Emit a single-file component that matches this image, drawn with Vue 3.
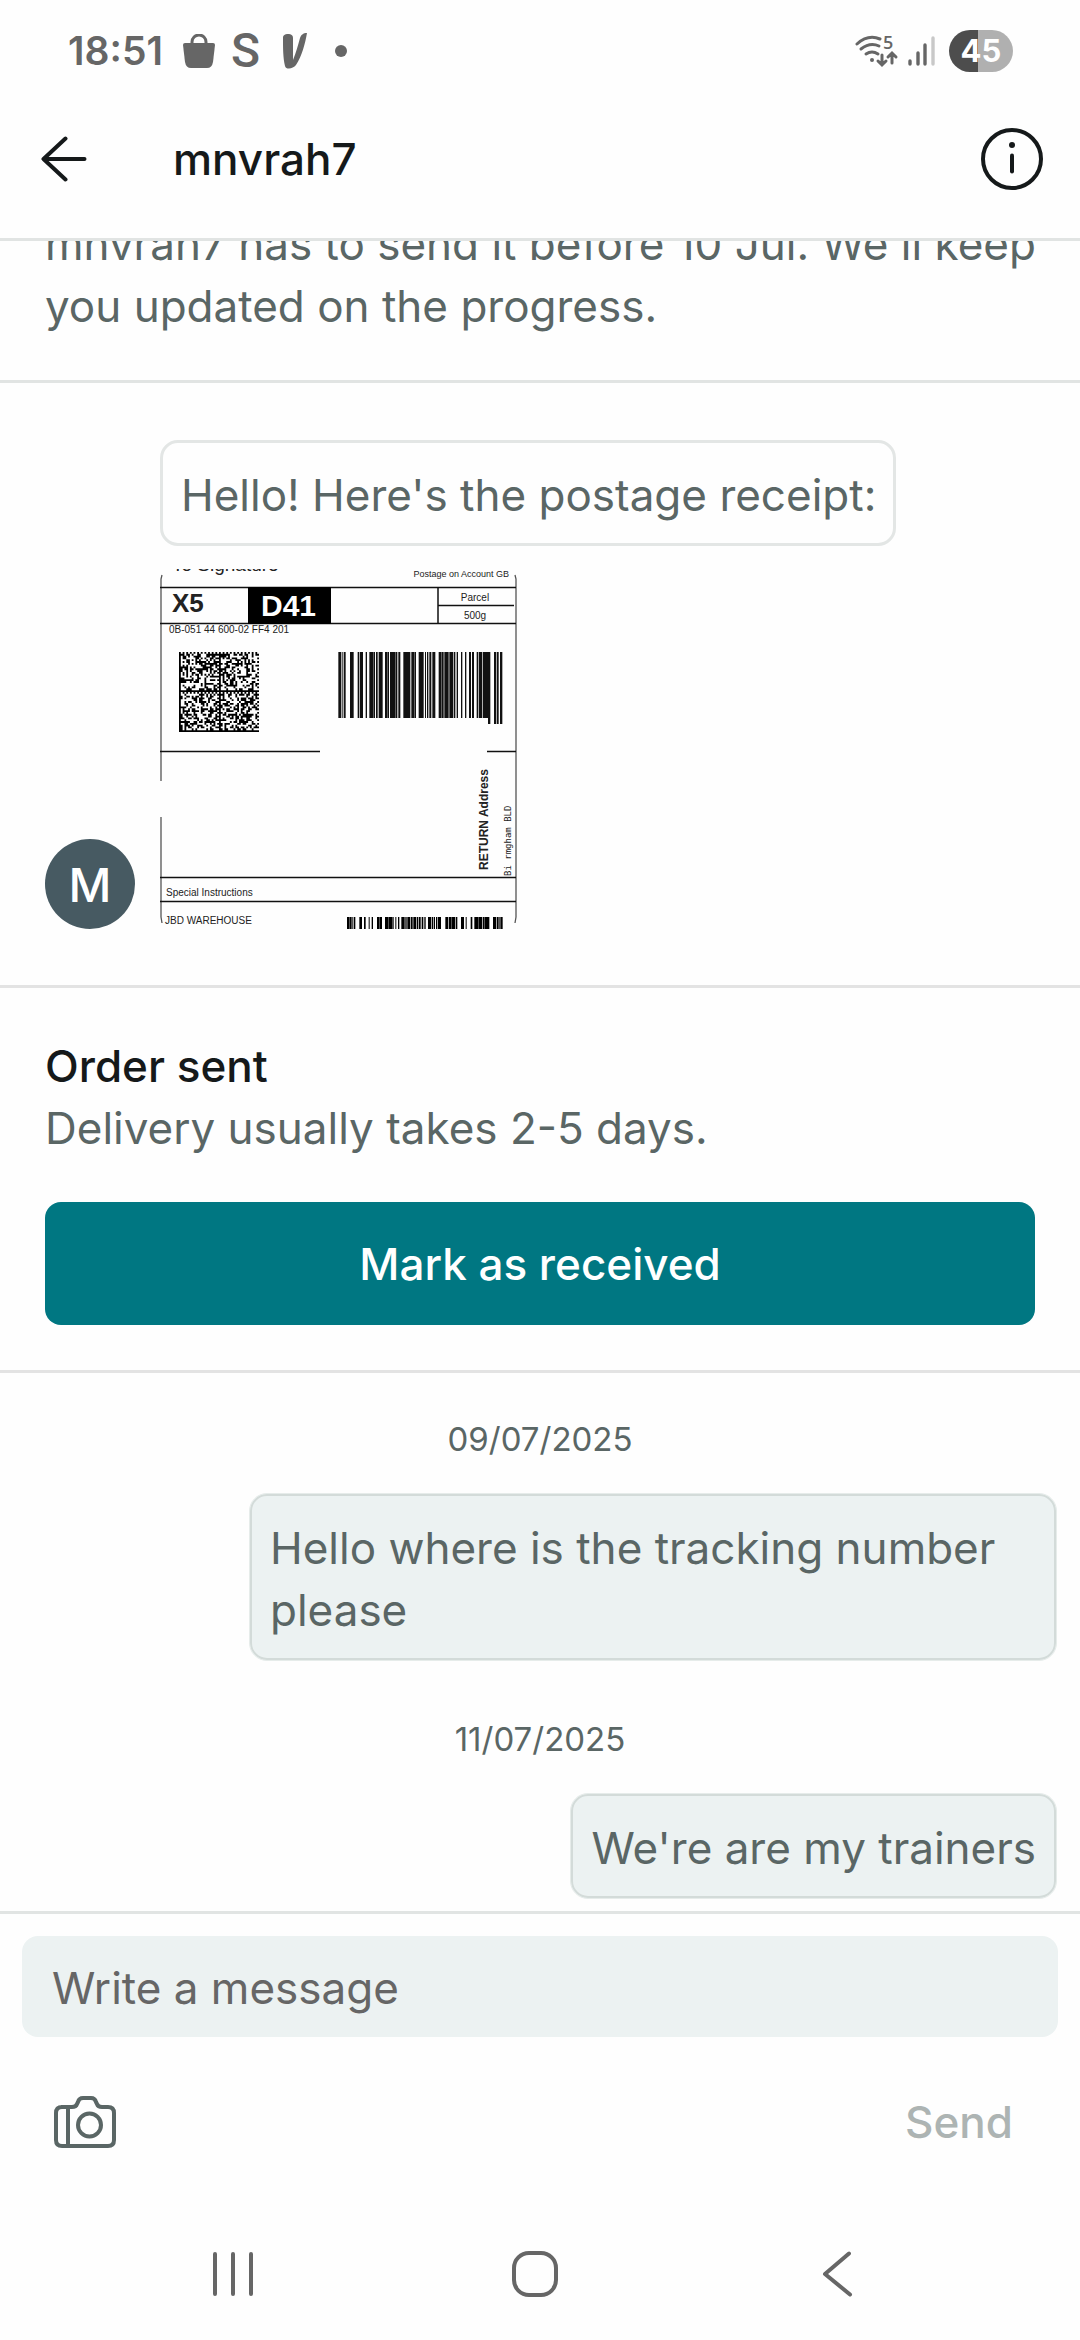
<template>
    <div class="screen">
        <div class="status">
            <span class="clock">18:51</span>
            <svg class="bag" viewBox="0 0 32 34" width="32" height="34">
                <path d="M9 10V8a7 7 0 0 1 14 0v2" fill="none" stroke="#666" stroke-width="3" />
                <path d="M2 9h28q2 0 2 2l-2 17q-1 6-6 6H8q-5 0-6-6L0 11q0-2 2-2z" fill="#666" />
            </svg>
            <span class="letter">S</span>
            <svg class="vlogo" viewBox="0 0 24 36" width="24" height="36">
                <path d="M0 5C0 2 2 1 5 1s5 1 5 4l0 22C13 20 15 12 17 5 18 2 20 0 24 0 22 11 19 23 13 32 10 36 3 37 2 33 0 25 0 14 0 5z" fill="#666" />
            </svg>
            <span class="dot"></span>
            <div class="system">
                <svg viewBox="0 -3 44 38" width="44" height="38">
                    <g fill="none" stroke="#666" stroke-width="3" stroke-linecap="round">
                        <path d="M2 9Q13-1 25 4" />
                        <path d="M6 14Q15 7 24 11" />
                        <path d="M11 19q6-4 12 0" />
                        <path d="M27 20v9M23 26l4 4 4-4M37 28v-9M33 22l4-4 4 4" />
                    </g>
                    <circle cx="17" cy="25" r="2" fill="#666" />
                    <text x="28" y="14" class="wifitext">5</text>
                </svg>
                <svg viewBox="0 0 28 30" width="28" height="30">
                    <path d="M3 25v3M11 17v11M18 9v19" stroke="#666" stroke-width="3.4" stroke-linecap="round" />
                    <path d="M26 2v26" stroke="#c8c8c8" stroke-width="3.4" stroke-linecap="round" />
                </svg>
                <span class="battery">45</span>
            </div>
        </div>

        <header class="header">
            <button class="iconbtn" aria-label="Back">
                <svg viewBox="0 0 46 46" width="46" height="46">
                    <path d="M43.500 23H3M24.500 2.500L2.500 23l22 20.500" fill="none" stroke="#15191a" stroke-width="4" stroke-linecap="round" stroke-linejoin="round" />
                </svg>
            </button>
            <h1>{{ seller }}</h1>
            <button class="iconbtn" aria-label="Details">
                <svg viewBox="0 0 62 62" width="62" height="62">
                    <circle cx="31" cy="31" r="29" fill="none" stroke="#15191a" stroke-width="4" />
                    <circle cx="31" cy="17" r="3" fill="#15191a" />
                    <path d="M31 27.500v16" stroke="#15191a" stroke-width="4" stroke-linecap="round" />
                </svg>
            </button>
        </header>

        <main class="chat">
            <section class="notice">
                <p>{{ seller }} has to send it before 10 Jul. We'll keep you updated on the progress.</p>
            </section>

            <section class="received">
                <div class="avatar">M</div>
                <div class="stack">
                    <p class="bubble">Hello! Here's the postage receipt:</p>
                    <svg class="receipt" viewBox="0 0 360 360" width="360" height="360" role="img" aria-label="Postage receipt">
                        <g fill="none" stroke="#555" stroke-width="1.300">
                            <path d="M2 6L1 10V212M1 248V348l1 6M355 6l1 4V348l-1 6" />
                        </g>
                        <g fill="none" stroke="#111" stroke-width="1.500">
                            <path d="M0 18.500H356M0 54.500H356M278 18V55M278 36.500H354M0 182.500H160M327 182.500H356M0 308.500H356M0 332.500H356" />
                        </g>
                        <rect x="88" y="18" width="83" height="37" fill="#000" />
                        <text x="12" y="2" class="t19">To Signature</text>
                        <text x="349" y="8" class="t9" text-anchor="end">Postage on Account GB</text>
                        <text x="12" y="43" class="t26">X5</text>
                        <text x="101" y="47" class="t30">D41</text>
                        <text x="315" y="32" class="t10" text-anchor="middle">Parcel</text>
                        <text x="315" y="50" class="t10" text-anchor="middle">500g</text>
                        <text x="9" y="64" class="t10">0B-051 44 600-02 FF4 201</text>
                        <path :d="matrixPath" fill="#000" />
                        <path :d="barPath(topBars, 83, 66)" fill="#111" />
                        <path :d="barPath(longBars, 83, 72)" fill="#111" />
                        <text transform="translate(328 301) rotate(-90)" class="t12">RETURN Address</text>
                        <text transform="translate(351 307) rotate(-90)" class="mono">Bi rmgham BLD</text>
                        <text x="6" y="327" class="t10">Special Instructions</text>
                        <text x="5" y="355" class="t10">JBD WAREHOUSE</text>
                        <path :d="barPath(bottomBars, 348, 12)" fill="#000" />
                    </svg>
                </div>
            </section>

            <section class="order">
                <h2>Order sent</h2>
                <p>Delivery usually takes 2-5 days.</p>
                <button class="primary">Mark as received</button>
            </section>

            <section class="sent">
                <template v-for="item in messages" :key="item.date">
                    <time>{{ item.date }}</time>
                    <div class="mine">
                        <p class="bubble own">{{ item.text }}</p>
                    </div>
                </template>
            </section>
        </main>

        <form class="composer" @submit.prevent="send">
            <input v-model="draft" type="text" placeholder="Write a message" aria-label="Write a message">
            <div class="actions">
                <button type="button" class="iconbtn" aria-label="Add photo">
                    <svg viewBox="0 0 62 52" width="62" height="52">
                        <g fill="none" stroke="#5a6665" stroke-width="4" stroke-linejoin="round">
                            <path d="M7 11H18q4 0 5-3l1-2q1-4 5-4h8q4 0 5 4l1 2q1 3 5 3h6q6 0 6 6v27q0 6-6 6H8q-6 0-6-6V17q0-6 6-6" />
                            <path d="M14 11v39" />
                            <circle cx="35.500" cy="29" r="11.500" />
                        </g>
                    </svg>
                </button>
                <button type="submit" class="send" :disabled="!draft">Send</button>
            </div>
        </form>

        <nav class="navbar">
            <button class="iconbtn" aria-label="Recents">
                <svg viewBox="0 0 46 46" width="46" height="46">
                    <path d="M5 3v40M23 3v40M41 3v40" stroke="#666" stroke-width="4" stroke-linecap="round" />
                </svg>
            </button>
            <button class="iconbtn" aria-label="Home">
                <svg viewBox="0 0 46 46" width="46" height="46">
                    <rect x="2" y="2" width="42" height="42" rx="15" fill="none" stroke="#666" stroke-width="4" />
                </svg>
            </button>
            <button class="iconbtn" aria-label="Go back">
                <svg viewBox="0 0 46 46" width="46" height="46">
                    <path d="M35 2.500L11 23l25 20.500" fill="none" stroke="#666" stroke-width="4" stroke-linecap="round" stroke-linejoin="round" />
                </svg>
            </button>
        </nav>
    </div>
</template>

<script setup>
    import { ref } from 'vue';

    const seller = 'mnvrah7';
    const draft = ref('');

    const messages = ref([
        { date: '09/07/2025', text: 'Hello where is the tracking number please' },
        { date: '11/07/2025', text: "We're are my trainers" }
    ]);

    function send() {
        draft.value = '';
    }

    // [start, width] of every bar, in thirds of a unit
    const topBars = [
        [535, 8], [547, 2], [552, 4], [570, 10], [593, 4], [600, 8], [617, 3], [628, 10],
        [640, 4], [648, 4], [656, 11], [675, 5], [682, 4], [690, 15], [707, 4], [715, 5],
        [730, 20], [754, 8], [764, 3], [776, 14], [795, 2], [801, 3], [808, 5], [817, 8],
        [836, 6], [844, 6], [853, 12], [868, 10], [881, 4], [890, 3], [903, 3], [915, 3],
        [927, 5], [936, 5], [950, 4], [957, 9], [969, 14]
    ];
    const longBars = [[984, 6], [1002, 6], [1011, 4], [1020, 6]];
    const bottomBars = [
        [561, 7], [570, 3], [575, 2], [581, 4], [598, 7], [612, 4], [626, 2], [635, 3],
        [651, 5], [658, 7], [675, 9], [686, 9], [697, 3], [706, 2], [714, 3], [724, 9],
        [736, 3], [742, 8], [753, 4], [760, 8], [771, 3], [777, 4], [785, 4], [793, 3],
        [804, 9], [816, 2], [821, 3], [828, 2], [833, 9], [856, 8], [867, 6], [875, 9],
        [887, 4], [903, 8], [917, 2], [932, 4], [943, 11], [956, 9], [968, 5], [975, 12],
        [999, 9], [1011, 3], [1016, 2], [1021, 6]
    ];

    function barPath(bars, y, height) {
        return bars.map(([x, w]) => `M${x / 3} ${y}h${(w + 1) / 3}v${height}h-${(w + 1) / 3}z`).join('');
    }

    // four data matrix blocks side by side, 22 cells each
    const cell = 80 / 44;
    let seed = 77;
    let matrixPath = '';
    for (let row = 0; row < 44; row++) {
        for (let col = 0; col < 44; col++) {
            seed = (seed * 16807) % 2147483647;
            const r = row % 22;
            const c = col % 22;
            let on = seed / 2147483647 > 0.52;
            if (c === 21) on = r % 2 === 1;
            if (r === 0) on = c % 2 === 0;
            if (c === 0 || r === 21) on = true;
            if (on) matrixPath += `M${19 + col * cell} ${83 + row * cell}h${cell}v${cell}h-${cell}z`;
        }
    }
</script>

<style>
    body {
        margin: 0;
        background: #fefefe;
    }
</style>

<style scoped>
    .screen {
        height: 100vh;
        display: flex;
        flex-direction: column;
        background: #fefefe;
        color: #5a6665;
        font-family: Inter, "Liberation Sans", sans-serif;
        font-size: 44px;
        line-height: 62px;
    }

    h1, h2, p {
        margin: 0;
        font-size: 44px;
        font-weight: 400;
    }

    h1, h2 {
        color: #15191a;
        font-weight: 500;
    }

    button {
        font: inherit;
        border: none;
        background: none;
        padding: 0;
    }

    svg {
        display: block;
    }

    .iconbtn {
        display: flex;
        align-items: center;
        justify-content: center;
    }

    .status {
        height: 58px;
        flex-shrink: 0;
        padding: 22px 67px 0 68px;
        display: flex;
        align-items: center;
        color: #666;
    }

    .clock {
        font-size: 39px;
        font-weight: 600;
    }

    .bag {
        margin-left: 20px;
    }

    .letter {
        margin-left: 16px;
        font-family: Roboto, sans-serif;
        font-size: 48px;
        font-weight: 500;
    }

    .vlogo {
        margin-left: 23px;
    }

    .dot {
        width: 12px;
        height: 12px;
        margin-left: 28px;
        border-radius: 50%;
        background: #666;
    }

    .system {
        margin-left: auto;
        display: flex;
        align-items: center;
        gap: 8px;
    }

    .wifitext {
        font: 600 18px "Open Sans", sans-serif;
        fill: #666;
    }

    .battery {
        width: 64px;
        height: 42px;
        margin-left: 6px;
        border-radius: 21px;
        background: linear-gradient(90deg, #4d4d4d 45%, #b0b0b0 45%);
        color: white;
        font-size: 31px;
        font-weight: 700;
        line-height: 42px;
        text-align: center;
    }

    .header {
        height: 158px;
        flex-shrink: 0;
        padding: 0 37px 0 41px;
        border-bottom: solid 3px #e1e4e3;
        display: flex;
        align-items: center;

        h1 {
            flex: 1;
            margin-left: 86px;
        }
    }

    .chat {
        flex: 1;
        min-height: 0;
        overflow: hidden;
        display: flex;
        flex-direction: column;
        justify-content: flex-end;
    }

    section {
        flex-shrink: 0;
    }

    .notice {
        padding: 43px 36px 43px 45px;
        border-bottom: solid 3px #e1e4e3;
    }

    .received {
        padding: 57px 45px 56px;
        border-bottom: solid 3px #e3e3e3;
        display: flex;
        align-items: flex-end;
        gap: 25px;
    }

    .avatar {
        width: 90px;
        height: 90px;
        border-radius: 50%;
        background: #475a62;
        color: white;
        font-size: 47px;
        font-weight: 500;
        line-height: 92px;
        text-align: center;
    }

    .stack {
        display: flex;
        flex-direction: column;
        align-items: flex-start;
        gap: 23px;
    }

    .bubble {
        padding: 21px 17px 17px 18px;
        border: solid 3px #e3e6e5;
        border-radius: 18px;
    }

    .own {
        padding: 23px 20px 19px;
        border: solid 1px #e6ecea;
        background: #ecf2f2;
        box-shadow: inset 0 0 0 2px #d3dbd9;
    }

    .receipt {
        overflow: hidden;
        font-family: "Liberation Sans", Arial, sans-serif;
        fill: #222;
    }

    .t9 { font-size: 9px; }
    .t10 { font-size: 10px; }
    .t12 { font-size: 12px; font-weight: 700; }
    .t19 { font-size: 19px; }
    .t26 { font-size: 26px; font-weight: 700; }
    .t30 { font-size: 30px; font-weight: 700; fill: white; }
    .mono { font: 9px "DejaVu Sans Mono", monospace; }

    .order {
        padding: 47px 45px 45px;
        border-bottom: solid 3px #e3e3e3;
    }

    .primary {
        width: 100%;
        height: 123px;
        margin-top: 43px;
        border-radius: 16px;
        background: #007782;
        color: white;
        font-weight: 500;
        display: block;
    }

    .sent {
        padding: 41px 23px 12px;
        display: flex;
        flex-direction: column;
    }

    time {
        font-size: 33px;
        line-height: 50px;
        text-align: center;
    }

    .mine {
        margin-top: 29px;
        padding-left: 226px;
        display: flex;
        justify-content: flex-end;

        & + time {
            margin-top: 53px;
        }
    }

    .composer {
        flex-shrink: 0;
        padding: 22px 22px 0;
        border-top: solid 3px #e1e4e3;

        input {
            width: 100%;
            height: 101px;
            box-sizing: border-box;
            padding: 2px 30px 0;
            border: none;
            border-radius: 16px;
            background: #ecf2f2;
            color: #15191a;
            font: inherit;
            display: block;
        }

        input::placeholder {
            color: #666;
            opacity: 1;
        }
    }

    .actions {
        height: 170px;
        padding: 0 45px 0 32px;
        display: flex;
        align-items: center;
        justify-content: space-between;
    }

    .send {
        color: #15191a;
        font-weight: 500;
    }

    .send:disabled {
        color: #adb4b3;
    }

    .navbar {
        height: 133px;
        flex-shrink: 0;
        padding: 0 92px 0 82px;
        display: flex;
        align-items: center;
        justify-content: space-around;
    }
</style>
